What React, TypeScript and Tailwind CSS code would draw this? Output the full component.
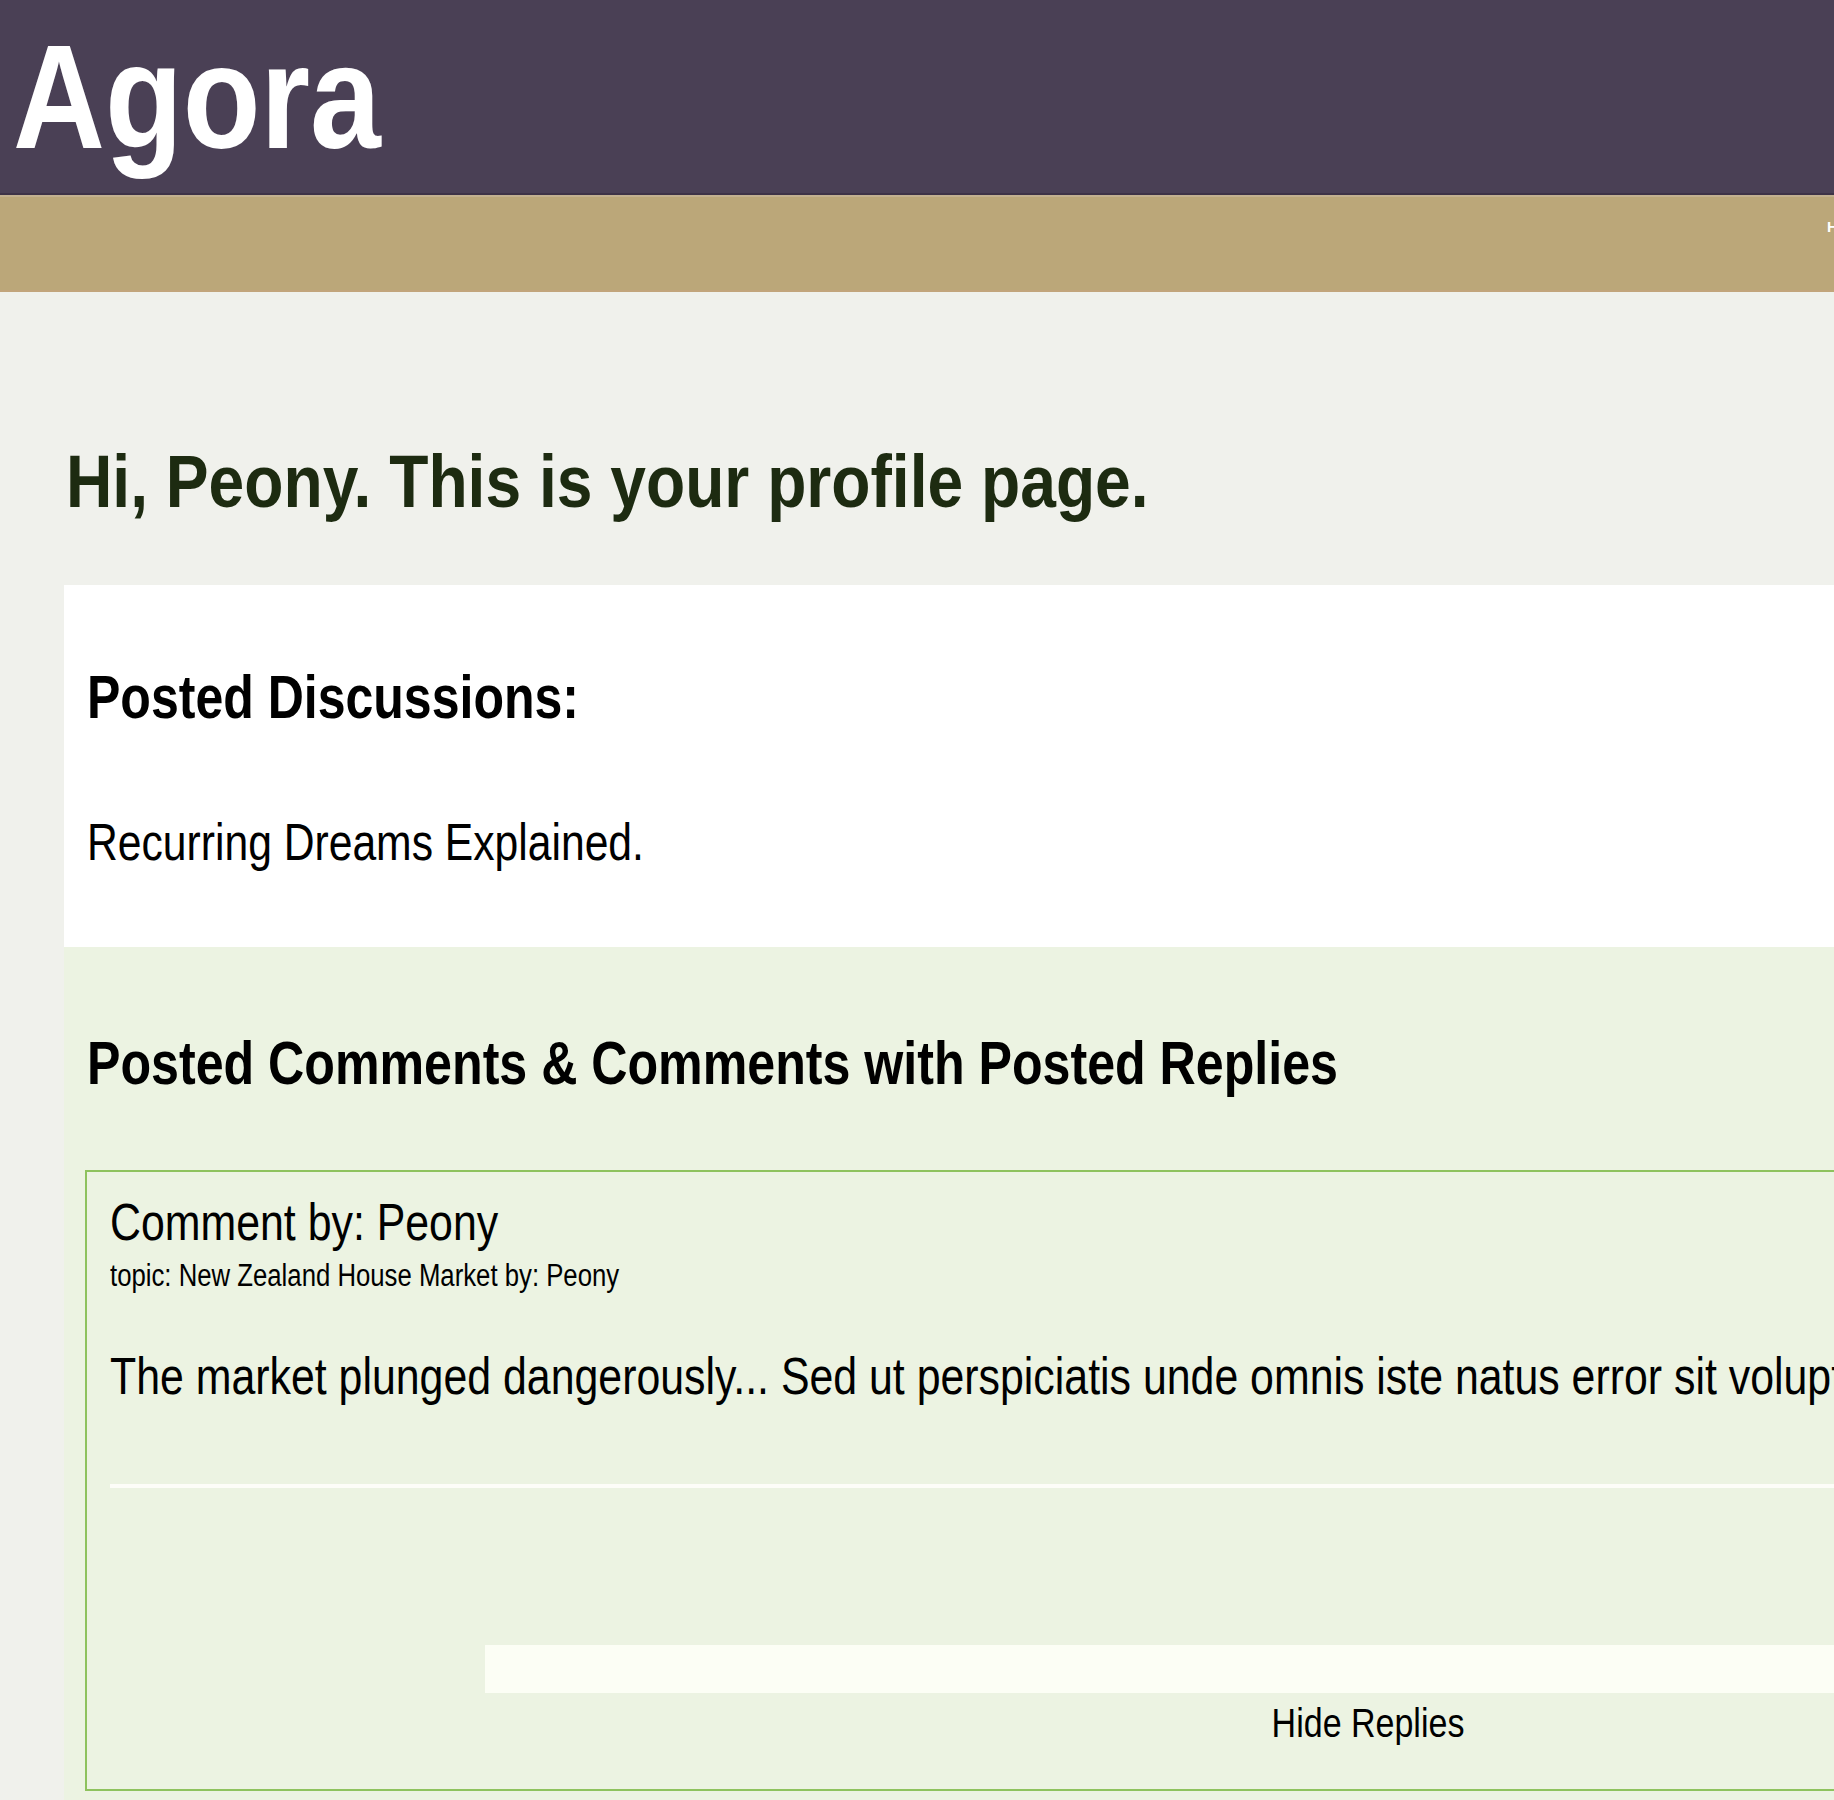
export default function App() {
  return (
    <div className="w-[1834px] h-[1800px] overflow-hidden bg-[#f0f1ec] font-['Liberation_Sans',Arial,sans-serif] text-black">
      <div className="w-[2600px]">
        {/* Top banner */}
        <header className="h-[195px] bg-[#4a4055] border-b-2 border-[#3e3347] pt-[23px] pl-[13px]">
          <h1 className="text-[148px] leading-none font-bold text-white origin-left scale-x-[0.86]">Agora</h1>
        </header>

        {/* Nav strip */}
        <nav className="h-[97px] bg-[#bba779] border-t-2 border-t-[#c3b190] border-b-2 border-b-[#c2a57c] pt-[22px] pl-[1827px] flex gap-8">
          <a className="text-[15px] leading-none font-bold text-white">Home</a>
          <a className="text-[15px] leading-none font-bold text-white">Discussions</a>
        </nav>

        <main className="pt-[153px] pl-[64px]">
          <h2 className="ml-[2px] text-[74px] leading-none font-bold text-[#1d2b11] origin-left scale-x-[0.867] whitespace-nowrap">
            Hi, Peony. This is your profile page.
          </h2>

          {/* Posted discussions */}
          <section className="mt-[66px] bg-white pt-[82px] pb-[79px] pl-[23px]">
            <h3 className="text-[61px] leading-none font-bold origin-left scale-x-[0.82] whitespace-nowrap">Posted Discussions:</h3>
            <p className="mt-[88px] text-[52px] leading-none origin-left scale-x-[0.82] whitespace-nowrap">Recurring Dreams Explained.</p>
          </section>

          {/* Comments */}
          <section className="bg-[#ecf3e2] pt-[86px] pl-[21px] h-[900px]">
            <h3 className="ml-[2px] text-[61px] leading-none font-bold origin-left scale-x-[0.822] whitespace-nowrap">
              Posted Comments &amp; Comments with Posted Replies
            </h3>

            <div className="mt-[76px] border-2 border-[#8ec25e] bg-[#ecf3e2] pt-[24px] pb-[46px] pl-[23px]">
              <p className="text-[52px] leading-none origin-left scale-x-[0.824] whitespace-nowrap">Comment by: Peony</p>
              <p className="mt-[12px] text-[31px] leading-none origin-left scale-x-[0.83] whitespace-nowrap">
                topic: New Zealand House Market by: Peony
              </p>
              <p className="mt-[59px] text-[52px] leading-none origin-left scale-x-[0.824] whitespace-nowrap">
                The market plunged dangerously... Sed ut perspiciatis unde omnis iste natus error sit voluptatem accusantium doloremque laudantium
              </p>
              <div className="mt-[82px] h-[4px] bg-[#fdfdf8]" />

              {/* Replies */}
              <div className="ml-[375px] w-[1766px]">
                <div className="mt-[157px] h-[48px] bg-[#fcfef5]" />
                <button className="mt-[10px] block w-full text-center text-[40px] leading-none scale-x-[0.85]">
                  Hide Replies
                </button>
              </div>
            </div>
          </section>
        </main>
      </div>
    </div>
  );
}
